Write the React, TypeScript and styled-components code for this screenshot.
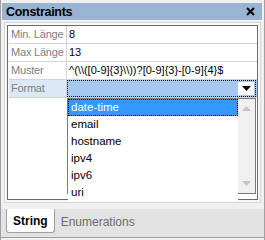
import React from 'react';
import styled, { createGlobalStyle } from 'styled-components';

const GlobalStyle = createGlobalStyle`
  html, body {
    margin: 0;
    padding: 0;
    background: #f0f0f0;
  }
  body {
    font-family: 'Liberation Sans', Arial, sans-serif;
    font-size: 11px;
  }
`;

interface Row {
  label: string;
  value: string;
}

const rows: Row[] = [
  { label: 'Min. Länge', value: '8' },
  { label: 'Max Länge', value: '13' },
  { label: 'Muster', value: '^(\\\\([0-9]{3}\\\\))?[0-9]{3}-[0-9]{4}$' },
];

const formats = ['date-time', 'email', 'hostname', 'ipv4', 'ipv6', 'uri'];

export default function App() {
  return (
    <>
      <GlobalStyle />
      <Window>
        <TitleBar>
          <Title>Constraints</Title>
          <CloseButton>
            <svg width="9" height="9" viewBox="0 0 9 9">
              <path d="M1 1 L8 8 M8 1 L1 8" stroke="#000" strokeWidth="2" />
            </svg>
          </CloseButton>
        </TitleBar>
        <Body>
          <GridFrame>
            <Grid>
              {rows.map((r) => (
                <GridRow key={r.label}>
                  <Label>{r.label}</Label>
                  <Value>{r.value}</Value>
                </GridRow>
              ))}
              <GridRow>
                <Label selected>Format</Label>
                <Value selected>
                  <FocusBox>
                    <DropButton>
                      <svg width="9" height="5" viewBox="0 0 9 5">
                        <path d="M0 0 H9 L4.5 5 Z" fill="#000" />
                      </svg>
                    </DropButton>
                  </FocusBox>
                  <DropList>
                    <Items>
                      {formats.map((f, i) => (
                        <Item key={f} active={i === 0}>
                          {f}
                        </Item>
                      ))}
                    </Items>
                    <ScrollBar>
                      <svg width="9" height="5" viewBox="0 0 9 5">
                        <path d="M4.5 0 L9 5 H0 Z" fill="#c4c4c4" />
                      </svg>
                      <svg width="9" height="5" viewBox="0 0 9 5">
                        <path d="M0 0 H9 L4.5 5 Z" fill="#c4c4c4" />
                      </svg>
                    </ScrollBar>
                  </DropList>
                </Value>
              </GridRow>
            </Grid>
          </GridFrame>
        </Body>
        <TabStrip>
          <Tab active>String</Tab>
          <Tab>Enumerations</Tab>
        </TabStrip>
      </Window>
    </>
  );
}

const Window = styled.div`
  width: 265px;
  height: 240px;
  box-sizing: border-box;
  border: 1px solid #a0a0a0;
  border-top: none;
  border-bottom: none;
  background: #f0f0f0;
  display: flex;
  flex-direction: column;
  padding-top: 3px;
`;

const TitleBar = styled.div`
  height: 17px;
  margin: 0 2px 0 1px;
  background: #99b4d1;
  display: flex;
  align-items: center;
  justify-content: space-between;
  padding: 0 7px 0 4px;
`;

const Title = styled.span`
  font-family: 'Liberation Sans', Arial, sans-serif;
  font-weight: bold;
  font-size: 12.5px;
  letter-spacing: -0.3px;
  color: #000;
`;

const CloseButton = styled.span`
  display: flex;
  align-items: center;
`;

const Body = styled.div`
  flex: 1;
  padding: 2px 3px 6px 3px;
  display: flex;
  flex-direction: column;
`;

const GridFrame = styled.div`
  flex: 1;
  border: 1px solid #d6d6d6;
  background: #f7f7f7;
  padding: 2px;
  display: flex;
`;

const Grid = styled.div`
  flex: 1;
  border: 1px solid #6b6b6b;
  background: #fff;
  padding-left: 1px;
`;

const GridRow = styled.div`
  display: grid;
  grid-template-columns: 58px 1fr;
  height: 17px;
  border-bottom: 1px solid #d4d4d4;
  position: relative;
`;

const Label = styled.div<{ selected?: boolean }>`
  color: #7f7f7f;
  padding-left: 2px;
  line-height: 17px;
  letter-spacing: -0.2px;
  white-space: nowrap;
  overflow: hidden;
  border-right: 1px solid #d4d4d4;
  background: ${({ selected }) => (selected ? '#dce8f6' : '#fff')};
`;

const Value = styled.div<{ selected?: boolean }>`
  color: #000;
  padding-left: 2px;
  line-height: 17px;
  white-space: nowrap;
  position: relative;
  background: ${({ selected }) => (selected ? '#a6c8ef' : '#fff')};
`;

const FocusBox = styled.div`
  position: absolute;
  inset: 0 1px 0 0;
  border: 1px dotted #000;
  display: flex;
  justify-content: flex-end;
  align-items: center;
  padding-right: 1px;
`;

const DropButton = styled.div`
  width: 16px;
  height: 13px;
  background: #fff;
  display: flex;
  align-items: center;
  justify-content: center;
`;

const DropList = styled.div`
  position: absolute;
  top: 18px;
  left: 0;
  right: 1px;
  height: 96px;
  box-sizing: border-box;
  border: 1px solid #7a7a7a;
  background: #fff;
  display: flex;
  z-index: 2;
`;

const Items = styled.div`
  flex: 1;
`;

const Item = styled.div<{ active?: boolean }>`
  height: 17px;
  line-height: 15px;
  padding-left: 2px;
  box-sizing: border-box;
  font-size: 11.5px;
  border: 1px ${({ active }) => (active ? 'dotted #000' : 'solid transparent')};
  background: ${({ active }) => (active ? '#3399ff' : '#fff')};
  color: ${({ active }) => (active ? '#fff' : '#000')};
`;

const ScrollBar = styled.div`
  width: 17px;
  background: #f0f0f0;
  display: flex;
  flex-direction: column;
  justify-content: space-between;
  align-items: center;
  padding: 7px 0;
`;

const TabStrip = styled.div`
  height: 28px;
  display: flex;
  align-items: flex-start;
  padding: 0 0 0 5px;
  background: #e3e3e3;
  border-bottom: 1px solid #a0a0a0;
  margin-bottom: 2px;
`;

const Tab = styled.div<{ active?: boolean }>`
  height: 24px;
  box-sizing: border-box;
  padding: 1px 6px 0;
  display: flex;
  align-items: center;
  font-family: 'Liberation Sans', Arial, sans-serif;
  font-size: 12px;
  font-weight: ${({ active }) => (active ? 'bold' : 'normal')};
  color: ${({ active }) => (active ? '#000' : '#6d6d6d')};
  background: ${({ active }) => (active ? '#fff' : 'transparent')};
  border: ${({ active }) => (active ? '1px solid #a0a0a0' : 'none')};
  border-top: none;
  border-radius: 0 0 3px 3px;
`;
